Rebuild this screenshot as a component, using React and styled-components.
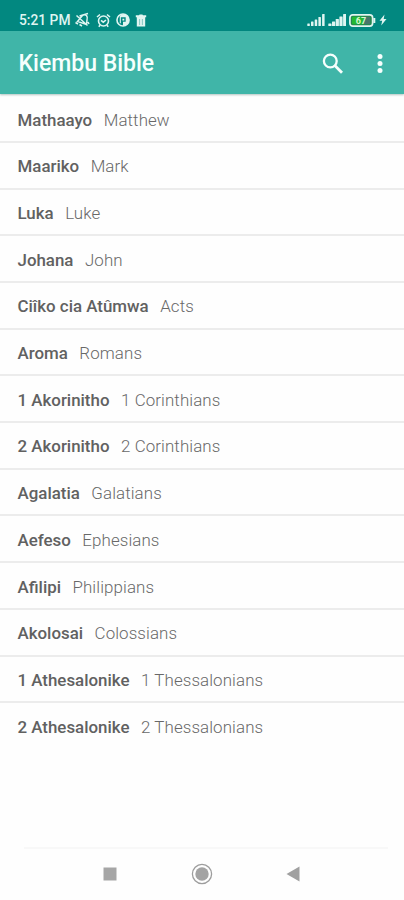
import React from "react";
import styled, { createGlobalStyle } from "styled-components";

const GlobalStyle = createGlobalStyle`
  * { box-sizing: border-box; }
  body { margin: 0; background: #fefefe; font-family: Roboto, sans-serif; }
`;

const Screen = styled.div`
  width: 404px;
  height: 900px;
  display: flex;
  flex-direction: column;
  overflow: hidden;
  background: #fefefe;
`;

const StatusBar = styled.div`
  height: 31px;
  flex: none;
  display: flex;
  align-items: center;
  justify-content: space-between;
  padding: 9px 17px 0 19px;
  background: #028880;
  color: #dff5f1;
`;

const StatusGroup = styled.div`
  display: flex;
  align-items: center;
  gap: ${(p) => p.$gap}px;
`;

const Clock = styled.span`
  font-size: 13.8px;
  font-weight: 500;
  line-height: 16px;
  width: 50px;
  white-space: nowrap;
`;

const AppBar = styled.header`
  height: 63px;
  flex: none;
  display: flex;
  align-items: center;
  padding: 2px 18px 0 18.5px;
  background: #40b5a8;
  color: #f6fffd;
  box-shadow: 0 1px 2px rgba(0, 60, 50, 0.3);
  z-index: 1;
`;

const Title = styled.h1`
  margin: 0;
  padding-top: 1px;
  flex: 1;
  font-size: 23px;
  font-weight: 500;
  line-height: 28px;
`;

const IconButton = styled.button`
  border: 0;
  padding: 0;
  margin: ${(p) => p.$margin || 0};
  background: none;
  color: inherit;
  display: flex;
`;

const BookList = styled.ul`
  list-style: none;
  margin: 0;
  padding: 2.3px 0 0;
  flex: 1;
`;

const BookRow = styled.li`
  height: 46.7px;
  display: flex;
  align-items: center;
  gap: 11.5px;
  padding: 2px 17.5px 0;
  white-space: nowrap;
  font-size: 16.9px;
  line-height: 22px;
  border-bottom: 2px solid #ececec;
  &:last-child { border-bottom-color: transparent; }
`;

const LocalName = styled.span`
  font-weight: 500;
  color: #616161;
`;

const EnglishName = styled.span`
  font-weight: 300;
  letter-spacing: 0.1px;
  color: #686868;
`;

const NavBar = styled.nav`
  height: 53px;
  flex: none;
  margin: 0 16px 0 24px;
  border-top: 2px solid #f8f8f8;
  display: flex;
  align-items: center;
  justify-content: space-between;
  padding: 0 88px 1px 79px;
`;

const books = [
  ["Mathaayo", "Matthew"],
  ["Maariko", "Mark"],
  ["Luka", "Luke"],
  ["Johana", "John"],
  ["Ciîko cia Atûmwa", "Acts"],
  ["Aroma", "Romans"],
  ["1 Akorinitho", "1 Corinthians"],
  ["2 Akorinitho", "2 Corinthians"],
  ["Agalatia", "Galatians"],
  ["Aefeso", "Ephesians"],
  ["Afilipi", "Philippians"],
  ["Akolosai", "Colossians"],
  ["1 Athesalonike", "1 Thessalonians"],
  ["2 Athesalonike", "2 Thessalonians"],
];

const MutedBell = () => (
  <svg width="16" height="16" viewBox="0 0 16 16" fill="none" stroke="currentColor" strokeWidth="1.5">
    <path d="M3.500 9.500 8 4Q10 1.800 12.500 3.500 14 5.500 13 8L12.500 12.500ZM5.500 12.500l2.500 1.500M2.500 3.500l11 10M1.500 10.500l2.500 1.500M14 10l1 2M5.500 4 14 1.500" />
  </svg>
);

const AlarmIcon = () => (
  <svg width="15" height="15" viewBox="0 0 15 15" fill="none" stroke="currentColor" strokeWidth="1.6">
    <circle cx="7.500" cy="8" r="5" />
    <path d="M1 4 4 1.500M14 4 11 1.500M5 7.300l2.300 1.900L10 7M4 12.200l-1.200 1.500M11 12.200l1.200 1.500" />
  </svg>
);

const DiscIcon = () => (
  <svg width="14" height="14" viewBox="0 0 13 13">
    <circle cx="6.500" cy="6.500" r="5.600" fill="none" stroke="currentColor" strokeWidth="1.500" />
    <path d="M6.500.900a5.600 5.600 0 0 1 0 11.200V8.200H9V4H4.500v5.500H3.500V2.500Z" fill="currentColor" />
    <rect x="6" y="5.300" width="1.700" height="1.700" fill="currentColor" />
  </svg>
);

const TrashIcon = () => (
  <svg width="12" height="13" viewBox="0 0 12 13">
    <path d="M.8 1.300H4L4.600.500h2.800l.6.800h3.200v2H.8ZM1.800 3h8.400v9.500H1.800Z" fill="currentColor" />
    <path d="M4.600 5v6M7.400 5v6" stroke="#028880" strokeWidth=".8" opacity=".5" />
  </svg>
);

const SignalIcon = ({ heights, gap }) => (
  <svg width="18" height="12" viewBox="0 0 18 12" fill="currentColor">
    {heights.map((h, i) => (
      <rect key={i} x={i * 3.7 + 0.3} y={12 - h} width={3.7 - gap} height={h} rx=".5" />
    ))}
  </svg>
);

const BatteryIcon = () => (
  <svg width="27" height="13" viewBox="0 0 27 13">
    <rect x=".9" y=".9" width="22.700" height="11.200" rx="2.800" fill="#25864f" stroke="#dff5f1" strokeWidth="1.700" />
    <rect x="3" y="2.800" width="12" height="7.400" rx="1" fill="#22b932" />
    <rect x="15" y="2.800" width="6" height="7.400" fill="#48756b" />
    <text x="12" y="9.600" textAnchor="middle" fontSize="9" fontWeight="700" fill="#d8f8d0">67</text>
    <path d="M25.300 4v5" stroke="#dff5f1" strokeWidth="2" />
  </svg>
);

const BoltIcon = () => (
  <svg width="8" height="12" viewBox="0 0 8 12" fill="currentColor">
    <path d="M5.500.500.500 6.800h2.700L2.200 11.500 7.500 5H4.700Z" />
  </svg>
);

const SearchIcon = () => (
  <svg width="22" height="22" viewBox="0 0 22 22" fill="none" stroke="currentColor">
    <circle cx="8.300" cy="8" r="6.400" strokeWidth="2.300" />
    <path d="m12.800 12.500 7.200 7.200" strokeWidth="2.800" />
  </svg>
);

const MoreIcon = () => (
  <svg width="6" height="22" viewBox="0 0 6 22" fill="currentColor">
    <circle cx="3" cy="3.500" r="2.500" />
    <circle cx="3" cy="10.500" r="2.500" />
    <circle cx="3" cy="17.500" r="2.500" />
  </svg>
);

const RecentsIcon = () => (
  <svg width="14" height="14"><rect x=".5" y=".5" width="13" height="13" fill="#a6a6a6" /></svg>
);

const HomeIcon = () => (
  <svg width="22" height="22" viewBox="0 0 22 22">
    <circle cx="11" cy="11" r="9.600" fill="none" stroke="#9d9d9d" strokeWidth="1.300" />
    <circle cx="11" cy="11" r="6.700" fill="#a3a3a3" />
  </svg>
);

const BackIcon = () => (
  <svg width="14" height="16"><path d="M.5 8 13.500.500v15Z" fill="#a0a0a0" /></svg>
);

export default function App() {
  return (
    <Screen>
      <GlobalStyle />
      <StatusBar>
        <StatusGroup $gap={5.3}>
          <Clock>5:21 PM</Clock>
          <MutedBell />
          <AlarmIcon />
          <DiscIcon />
          <TrashIcon />
        </StatusGroup>
        <StatusGroup $gap={3}>
          <SignalIcon heights={[2.5, 4.5, 6.5, 9, 12]} gap={1.2} />
          <SignalIcon heights={[2.5, 4.5, 7, 9.5, 12]} gap={0.5} />
          <BatteryIcon />
          <BoltIcon />
        </StatusGroup>
      </StatusBar>
      <AppBar>
        <Title>Kiembu Bible</Title>
        <IconButton aria-label="Search" $margin="0 33px 0 0"><SearchIcon /></IconButton>
        <IconButton aria-label="More options" $margin="0 3px 0 0"><MoreIcon /></IconButton>
      </AppBar>
      <BookList>
        {books.map(([local, english]) => (
          <BookRow key={local}>
            <LocalName>{local}</LocalName>
            <EnglishName>{english}</EnglishName>
          </BookRow>
        ))}
      </BookList>
      <NavBar>
        <IconButton aria-label="Recent apps"><RecentsIcon /></IconButton>
        <IconButton aria-label="Home" $margin="0 0 0 1.5px"><HomeIcon /></IconButton>
        <IconButton aria-label="Back"><BackIcon /></IconButton>
      </NavBar>
    </Screen>
  );
}
